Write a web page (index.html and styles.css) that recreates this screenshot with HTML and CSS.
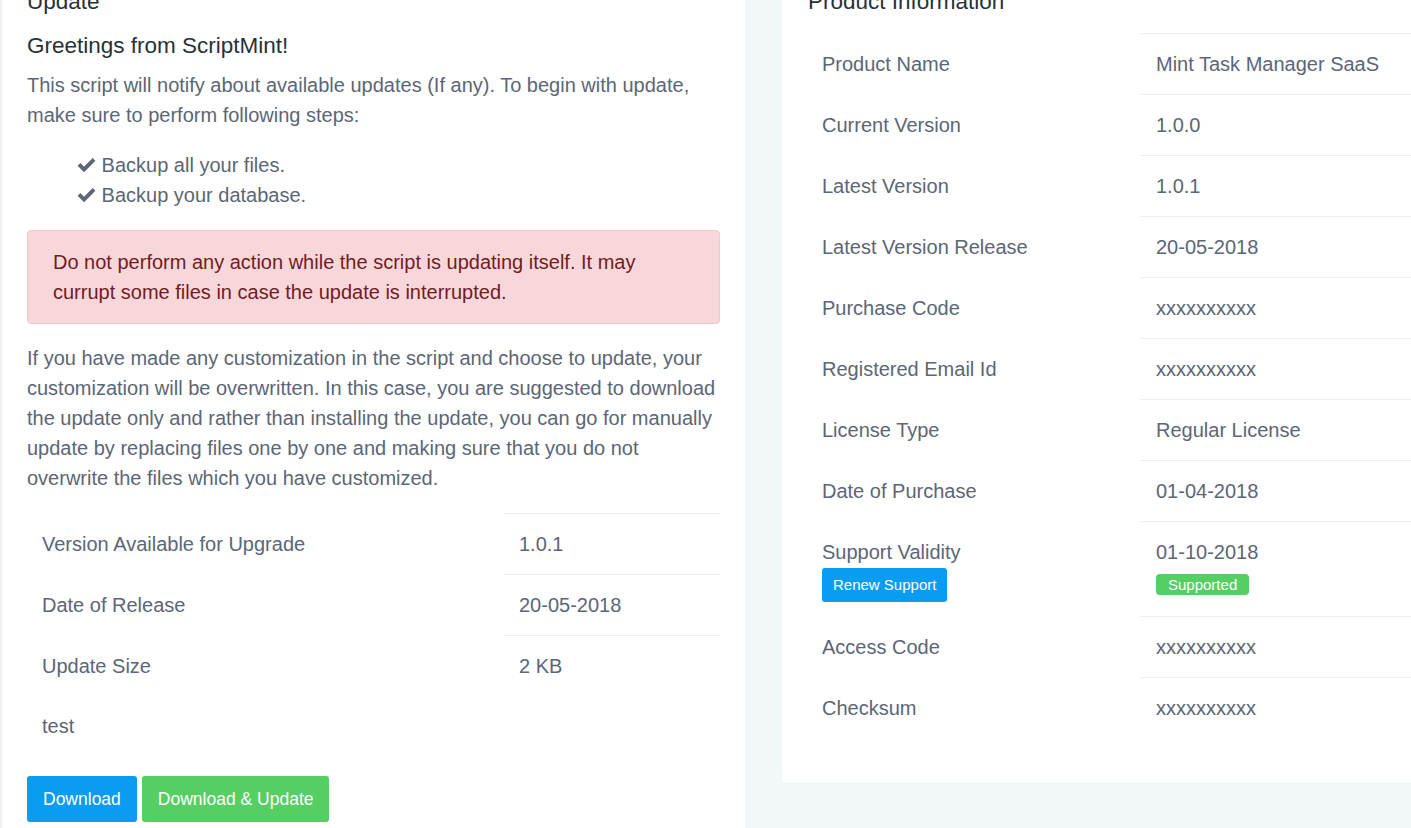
FILE: index.html
```html
<!DOCTYPE html>
<html lang="en">
<head>
    <meta charset="UTF-8">
    <title>Update</title>
    <link rel="stylesheet" href="styles.css">
</head>
<body>
    <div class="page">
        <div class="card update-card">
            <h4 class="card-title">Update</h4>
            <h5 class="greeting">Greetings from ScriptMint!</h5>
            <p>This script will notify about available updates (If any). To begin with update, make sure to perform following steps:</p>
            <ul class="steps">
                <li>
                    <svg class="check" viewBox="0 0 20 16"><path d="M0.5 8.2 L3.4 5.3 L7.4 9.3 L16.6 0.1 L19.5 3 L7.4 15.1 Z"/></svg>
                    Backup all your files.
                </li>
                <li>
                    <svg class="check" viewBox="0 0 20 16"><path d="M0.5 8.2 L3.4 5.3 L7.4 9.3 L16.6 0.1 L19.5 3 L7.4 15.1 Z"/></svg>
                    Backup your database.
                </li>
            </ul>
            <div class="alert">Do not perform any action while the script is updating itself. It may currupt some files in case the update is interrupted.</div>
            <p>If you have made any customization in the script and choose to update, your customization will be overwritten. In this case, you are suggested to download the update only and rather than installing the update, you can go for manually update by replacing files one by one and making sure that you do not overwrite the files which you have customized.</p>
            <table class="info-table update-table">
                <tr><td>Version Available for Upgrade</td><td>1.0.1</td></tr>
                <tr><td>Date of Release</td><td>20-05-2018</td></tr>
                <tr><td>Update Size</td><td>2 KB</td></tr>
                <tr class="no-line"><td>test</td><td></td></tr>
            </table>
            <div class="actions">
                <button class="btn btn-info">Download</button>
                <button class="btn btn-success">Download &amp; Update</button>
            </div>
        </div>

        <div class="card product-card">
            <h4 class="card-title">Product Information</h4>
            <table class="info-table product-table">
                <tr><td>Product Name</td><td>Mint Task Manager SaaS</td></tr>
                <tr><td>Current Version</td><td>1.0.0</td></tr>
                <tr><td>Latest Version</td><td>1.0.1</td></tr>
                <tr><td>Latest Version Release</td><td>20-05-2018</td></tr>
                <tr><td>Purchase Code</td><td>xxxxxxxxxx</td></tr>
                <tr><td>Registered Email Id</td><td>xxxxxxxxxx</td></tr>
                <tr><td>License Type</td><td>Regular License</td></tr>
                <tr><td>Date of Purchase</td><td>01-04-2018</td></tr>
                <tr>
                    <td>Support Validity<br><button class="btn btn-info btn-sm">Renew Support</button></td>
                    <td>01-10-2018<br><span class="badge">Supported</span></td>
                </tr>
                <tr><td>Access Code</td><td>xxxxxxxxxx</td></tr>
                <tr><td>Checksum</td><td>xxxxxxxxxx</td></tr>
            </table>
        </div>
    </div>
</body>
</html>
```

FILE: styles.css
```css
body {
    margin: 0;
    background: #f2f7f8;
    font-family: 'Liberation Sans', Arial, sans-serif;
    color: #5b6677;
    overflow: hidden;
}

.page {
    display: grid;
    grid-template-columns: 745px 660px;
    column-gap: 37px;
    align-items: start;
    margin-top: -35px;
}

.card {
    background: #fff;
    padding-top: 25px;
}

.update-card {
    border-left: 2px solid #eef1f2;
    padding-left: 25px;
    padding-right: 25px;
    padding-bottom: 40px;
}

.product-card {
    padding-left: 26px;
    padding-bottom: 44px;
}

.card-title {
    margin: 0;
    font-size: 22.5px;
    line-height: 24px;
    font-weight: normal;
    color: #263238;
}

.greeting {
    margin: 20px 0 12px;
    font-size: 22.5px;
    line-height: 24px;
    font-weight: normal;
    color: #263238;
}

p {
    margin: 0;
    font-size: 20px;
    line-height: 30px;
}

.steps {
    list-style: none;
    margin: 20px 0;
    padding-left: 50px;
    font-size: 20px;
    line-height: 30px;
}

.check {
    width: 19px;
    height: 15px;
    fill: #5b6677;
    vertical-align: -1px;
}

.alert {
    background: #f8d7da;
    border: 1px solid #f5c6cb;
    border-radius: 4px;
    color: #721c24;
    padding: 16px 25px;
    font-size: 20px;
    line-height: 30px;
    margin-bottom: 19px;
}

.info-table {
    border-collapse: collapse;
    font-size: 20px;
    line-height: 30px;
}

.info-table td {
    padding: 15px;
    vertical-align: top;
}

.info-table td:last-child {
    border-top: 1px solid #eceeef;
}

.info-table tr.no-line td {
    border-top: none;
}

.update-table {
    width: 693px;
    margin-top: 20px;
}

.update-table td:first-child {
    width: 447px;
}

.product-table {
    width: 100%;
    margin-top: 19px;
}

.product-table td:first-child {
    width: 304px;
    padding-left: 14px;
}

.actions {
    display: flex;
    gap: 5px;
    margin-top: 20px;
}

.btn {
    border: none;
    border-radius: 3px;
    color: #fff;
    font-family: inherit;
    font-size: 17.5px;
    line-height: 24px;
    padding: 11px 16px;
}

.btn-info {
    background: #0a9cf1;
}

.btn-success {
    background: #55ce63;
}

.btn-sm {
    font-size: 15px;
    line-height: 20px;
    padding: 7px 11px;
    margin-top: 1px;
    display: block;
}

.badge {
    display: inline-block;
    background: #55ce63;
    color: #fff;
    font-size: 15px;
    line-height: 21px;
    padding: 0 12px;
    border-radius: 4px;
    margin-top: 7px;
}
```
